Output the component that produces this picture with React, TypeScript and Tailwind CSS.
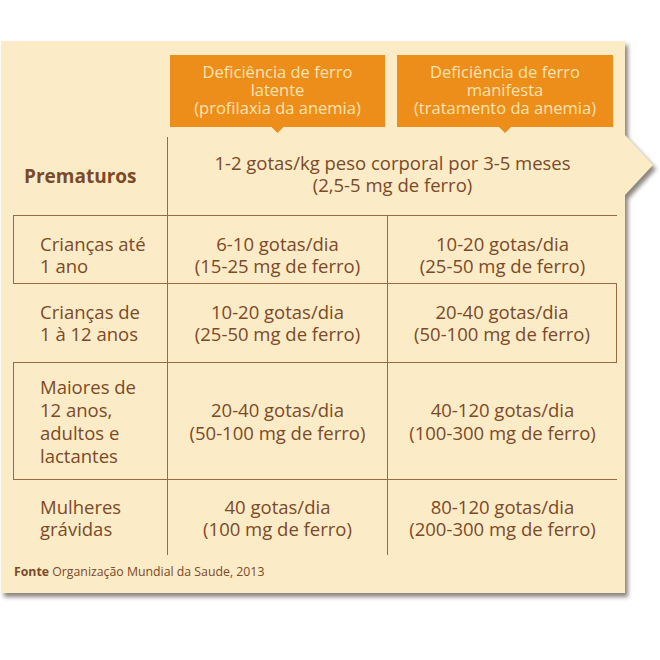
import React from "react";

const line = "border-[#9b6a45]";

export default function App() {
  const font = { fontFamily: '"Open Sans", "Noto Sans", sans-serif' };
  return (
    <div className="w-[660px] h-[660px] bg-white" style={font}>
      <div className="pt-[41px] pl-[1px]">
        <div className="relative w-[624px] h-[552px] drop-shadow-[3px_4px_2px_rgba(60,50,40,0.6)]">
          <div className="absolute left-full top-[94px] w-[28px] h-[60px] bg-[#fcebc7] [clip-path:polygon(0_0,100%_50%,0_100%)]" />
          <div className="relative h-full bg-[#fcebc7] pl-[12px] pt-[14px] text-[#7b4a28]">
            {/* header */}
            <div className="flex gap-[12px] pl-[157px]">
              <div className="relative w-[215px] h-[72px] bg-[#ee8e1a] text-[#fde3b0] text-[16.5px] leading-[18px] flex flex-col items-center justify-center text-center whitespace-nowrap pb-[3px]">
                <div>Deficiência de ferro</div>
                <div>latente</div>
                <div>(profilaxia da anemia)</div>
                <div className="absolute top-full left-1/2 -translate-x-1/2 w-[12px] h-[6px] bg-[#ee8e1a] [clip-path:polygon(0_0,100%_0,50%_100%)]" />
              </div>
              <div className="relative w-[216px] h-[72px] bg-[#ee8e1a] text-[#fde3b0] text-[16.5px] leading-[18px] flex flex-col items-center justify-center text-center whitespace-nowrap pb-[3px]">
                <div>Deficiência de ferro</div>
                <div>manifesta</div>
                <div>(tratamento da anemia)</div>
                <div className="absolute top-full left-1/2 -translate-x-1/2 w-[12px] h-[6px] bg-[#ee8e1a] [clip-path:polygon(0_0,100%_0,50%_100%)]" />
              </div>
            </div>

            {/* table */}
            <div className="mt-[10px] w-[604px] text-[18.5px] leading-[22px] whitespace-nowrap">
              <div className="grid grid-cols-[155px_449px] h-[78px]">
                <div className={`border-r ${line} flex items-center pl-[11px] font-bold text-[19px]`}>Prematuros</div>
                <div className="flex flex-col items-center justify-center text-center pb-[4px]">
                  <div>1-2 gotas/kg peso corporal por 3-5 meses</div>
                  <div>(2,5-5 mg de ferro)</div>
                </div>
              </div>

              <div className={`grid grid-cols-[154px_220px_229px] h-[68px] border-t border-l ${line}`}>
                <div className={`border-r ${line} flex flex-col justify-center pl-[26px] pt-[10px]`}>
                  <div>Crianças até</div>
                  <div>1 ano</div>
                </div>
                <div className={`border-r ${line} flex flex-col items-center justify-center pt-[10px]`}>
                  <div>6-10 gotas/dia</div>
                  <div>(15-25 mg de ferro)</div>
                </div>
                <div className="flex flex-col items-center justify-center pt-[10px]">
                  <div>10-20 gotas/dia</div>
                  <div>(25-50 mg de ferro)</div>
                </div>
              </div>

              <div className={`grid grid-cols-[155px_220px_228px] h-[79px] border-t border-r ${line}`}>
                <div className={`border-r ${line} flex flex-col justify-center pl-[27px]`}>
                  <div>Crianças de</div>
                  <div>1 à 12 anos</div>
                </div>
                <div className={`border-r ${line} flex flex-col items-center justify-center`}>
                  <div>10-20 gotas/dia</div>
                  <div>(25-50 mg de ferro)</div>
                </div>
                <div className="flex flex-col items-center justify-center">
                  <div>20-40 gotas/dia</div>
                  <div>(50-100 mg de ferro)</div>
                </div>
              </div>

              <div className={`grid grid-cols-[154px_220px_229px] h-[118px] border-t border-b border-l ${line} leading-[23px]`}>
                <div className={`border-r ${line} flex flex-col justify-center pl-[26px]`}>
                  <div>Maiores de</div>
                  <div>12 anos,</div>
                  <div>adultos e</div>
                  <div>lactantes</div>
                </div>
                <div className={`border-r ${line} flex flex-col items-center justify-center`}>
                  <div>20-40 gotas/dia</div>
                  <div>(50-100 mg de ferro)</div>
                </div>
                <div className="flex flex-col items-center justify-center">
                  <div>40-120 gotas/dia</div>
                  <div>(100-300 mg de ferro)</div>
                </div>
              </div>

              <div className="grid grid-cols-[155px_220px_229px] h-[75px]">
                <div className={`border-r ${line} flex flex-col justify-center pl-[27px]`}>
                  <div>Mulheres</div>
                  <div>grávidas</div>
                </div>
                <div className={`border-r ${line} flex flex-col items-center justify-center`}>
                  <div>40 gotas/dia</div>
                  <div>(100 mg de ferro)</div>
                </div>
                <div className="flex flex-col items-center justify-center">
                  <div>80-120 gotas/dia</div>
                  <div>(200-300 mg de ferro)</div>
                </div>
              </div>
            </div>

            <div className="mt-[9px] pl-[1px] text-[12.3px] leading-[15px] whitespace-nowrap">
              <span className="font-bold">Fonte</span> Organização Mundial da Saude, 2013
            </div>
          </div>
        </div>
      </div>
    </div>
  );
}
